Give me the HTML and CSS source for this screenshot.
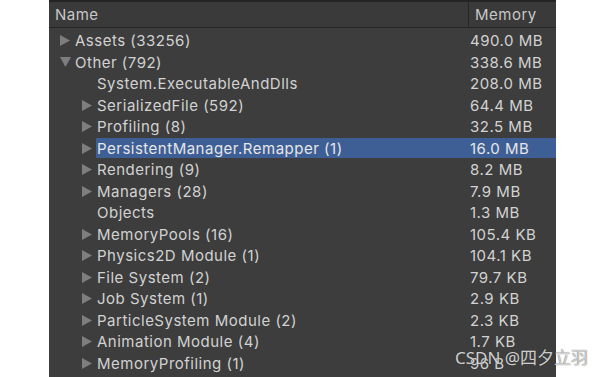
FILE: index.html
```html
<!DOCTYPE html>
<html lang="en">
<head>
    <meta charset="UTF-8">
    <title>Memory Profiler</title>
    <link rel="stylesheet" href="styles.css">
</head>
<body>
    <div class="panel">
        <div class="header">
            <div class="col-name">Name</div>
            <div class="col-mem">Memory</div>
        </div>
        <div class="rows">
            <div class="row lvl0"><span class="tog"><svg width="10" height="11"><polygon points="0,0 10,5.5 0,11"/></svg></span><div class="main"><span class="label">Assets (33256)</span><span class="mem">490.0 MB</span></div></div>
            <div class="row lvl0"><span class="tog"><svg width="11" height="10"><polygon points="0,0 11,0 5.5,10"/></svg></span><div class="main"><span class="label">Other (792)</span><span class="mem">338.6 MB</span></div></div>
            <div class="row lvl1"><span class="tog"></span><div class="main"><span class="label">System.ExecutableAndDlls</span><span class="mem">208.0 MB</span></div></div>
            <div class="row lvl1"><span class="tog"><svg width="10" height="11"><polygon points="0,0 10,5.5 0,11"/></svg></span><div class="main"><span class="label">SerializedFile (592)</span><span class="mem">64.4 MB</span></div></div>
            <div class="row lvl1"><span class="tog"><svg width="10" height="11"><polygon points="0,0 10,5.5 0,11"/></svg></span><div class="main"><span class="label">Profiling (8)</span><span class="mem">32.5 MB</span></div></div>
            <div class="row lvl1"><span class="tog"><svg width="10" height="11"><polygon points="0,0 10,5.5 0,11"/></svg></span><div class="main selected"><span class="label">PersistentManager.Remapper (1)</span><span class="mem">16.0 MB</span></div></div>
            <div class="row lvl1"><span class="tog"><svg width="10" height="11"><polygon points="0,0 10,5.5 0,11"/></svg></span><div class="main"><span class="label">Rendering (9)</span><span class="mem">8.2 MB</span></div></div>
            <div class="row lvl1"><span class="tog"><svg width="10" height="11"><polygon points="0,0 10,5.5 0,11"/></svg></span><div class="main"><span class="label">Managers (28)</span><span class="mem">7.9 MB</span></div></div>
            <div class="row lvl1"><span class="tog"></span><div class="main"><span class="label">Objects</span><span class="mem">1.3 MB</span></div></div>
            <div class="row lvl1"><span class="tog"><svg width="10" height="11"><polygon points="0,0 10,5.5 0,11"/></svg></span><div class="main"><span class="label">MemoryPools (16)</span><span class="mem">105.4 KB</span></div></div>
            <div class="row lvl1"><span class="tog"><svg width="10" height="11"><polygon points="0,0 10,5.5 0,11"/></svg></span><div class="main"><span class="label">Physics2D Module (1)</span><span class="mem">104.1 KB</span></div></div>
            <div class="row lvl1"><span class="tog"><svg width="10" height="11"><polygon points="0,0 10,5.5 0,11"/></svg></span><div class="main"><span class="label">File System (2)</span><span class="mem">79.7 KB</span></div></div>
            <div class="row lvl1"><span class="tog"><svg width="10" height="11"><polygon points="0,0 10,5.5 0,11"/></svg></span><div class="main"><span class="label">Job System (1)</span><span class="mem">2.9 KB</span></div></div>
            <div class="row lvl1"><span class="tog"><svg width="10" height="11"><polygon points="0,0 10,5.5 0,11"/></svg></span><div class="main"><span class="label">ParticleSystem Module (2)</span><span class="mem">2.3 KB</span></div></div>
            <div class="row lvl1"><span class="tog"><svg width="10" height="11"><polygon points="0,0 10,5.5 0,11"/></svg></span><div class="main"><span class="label">Animation Module (4)</span><span class="mem">1.7 KB</span></div></div>
            <div class="row lvl1"><span class="tog"><svg width="10" height="11"><polygon points="0,0 10,5.5 0,11"/></svg></span><div class="main"><span class="label">MemoryProfiling (1)</span><span class="mem">96 B</span></div></div>
        </div>
    </div>
    <div class="watermark">CSDN @四夕立羽</div>
</body>
</html>
```

FILE: styles.css
```css
body {
    margin: 0;
    background: #ffffff;
    font-family: Inter, "Noto Sans", sans-serif;
    font-size: 15px;
    letter-spacing: 0.5px;
    color: #d2d2d2;
    height: 377px;
    overflow: hidden;
    position: relative;
}

.panel {
    margin-left: 49px;
    width: 507px;
    height: 377px;
    overflow: hidden;
    background-color: #3d3d3d;
    border-top: 2px solid #242424;
    box-sizing: border-box;
}

.header {
    display: flex;
    height: 25px;
    background-color: #3a3a3a;
    border-bottom: 1px solid #262626;
    line-height: 25px;
    color: #c8c8c8;
}

.col-name {
    width: 420px;
    padding-left: 6px;
    box-sizing: border-box;
    border-right: 1px solid #262626;
}

.col-mem {
    flex: 1;
    padding-left: 6px;
}

.rows {
    padding-top: 2px;
}

.row {
    display: flex;
    align-items: center;
    height: 21.5px;
}

.lvl0 {
    padding-left: 11px;
}

.lvl1 {
    padding-left: 33px;
}

.tog {
    width: 15px;
    flex-shrink: 0;
    display: flex;
    align-items: center;
}

.tog svg {
    fill: #7e7e7e;
}

.main {
    flex: 1;
    display: flex;
    align-items: center;
    height: 20px;
    margin-left: -1px;
    padding-left: 1px;
}

.label {
    flex: 1;
    white-space: nowrap;
}

.mem {
    width: 86px;
    flex-shrink: 0;
    white-space: nowrap;
}

.selected {
    background-color: #3e5f96;
    color: #e6e6e6;
}

.watermark {
    position: absolute;
    left: 455px;
    top: 344px;
    font-family: "Noto Sans", "Noto Sans CJK SC", sans-serif;
    font-size: 17px;
    letter-spacing: 0;
    color: rgba(235, 235, 235, 0.85);
    text-shadow: 0 0 1px #333333;
    white-space: nowrap;
}
```
